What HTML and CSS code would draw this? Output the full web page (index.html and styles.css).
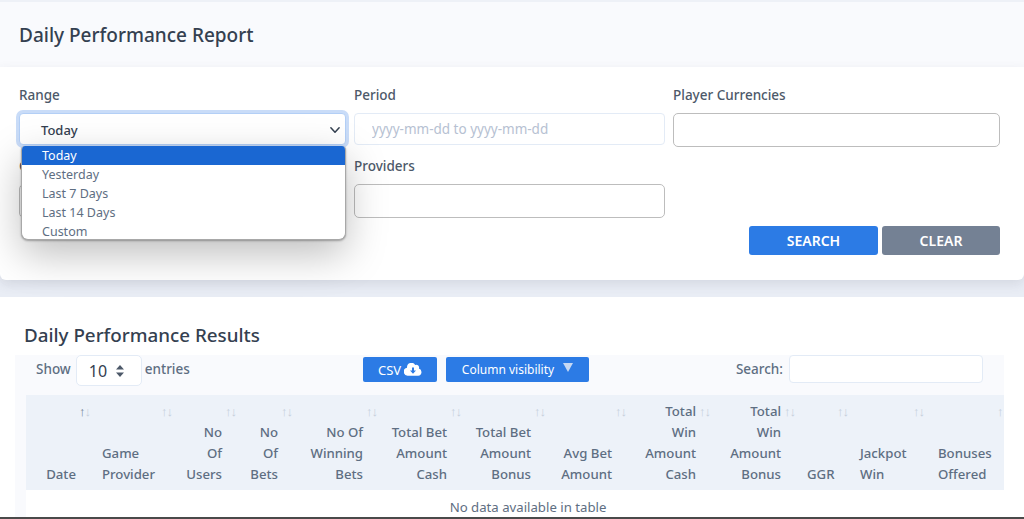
FILE: index.html
```html
<!DOCTYPE html>
<html>
<head>
<meta charset="UTF-8">
<title>Daily Performance Report</title>
<link rel="stylesheet" href="styles.css">
</head>
<body>

<div class="page">

	<div class="report-head">
		<h1 class="title">Daily Performance Report</h1>
	</div>

	<div class="filter-card">
		<div class="filter-grid">
			<div class="field">
				<label class="field-label">Range</label>
				<div class="range-select">
					<span>Today</span>
					<svg class="chevron" width="12" height="12" viewBox="0 0 16 16"><path d="M2.500 5l5.500 6 5.500-6" fill="none" stroke="#344050" stroke-width="2" stroke-linecap="round" stroke-linejoin="round"/></svg>
				</div>
				<ul class="range-menu">
					<li class="selected">Today</li>
					<li>Yesterday</li>
					<li>Last 7 Days</li>
					<li>Last 14 Days</li>
					<li>Custom</li>
				</ul>
			</div>
			<div class="field">
				<label class="field-label">Period</label>
				<input class="period-input" type="text" placeholder="yyyy-mm-dd to yyyy-mm-dd">
			</div>
			<div class="field">
				<label class="field-label">Player Currencies</label>
				<input class="box" type="text">
			</div>
			<div class="field">
				<label class="field-label">Games</label>
				<input class="box" type="text">
			</div>
			<div class="field">
				<label class="field-label">Providers</label>
				<input class="box" type="text">
			</div>
		</div>
		<div class="actions">
			<button class="btn btn-search" type="button">SEARCH</button>
			<button class="btn btn-clear" type="button">CLEAR</button>
		</div>
	</div>

	<div class="results-card">
		<h2 class="title results-title">Daily Performance Results</h2>
		<div class="table-wrap">
			<div class="toolbar">
				<div class="length">
					<span>Show</span>
					<div class="length-select">
						<span>10</span>
						<svg width="10" height="14" viewBox="0 0 10 14"><path d="M5 1l4 4.600H1zM5 13L1 8.400h8z" fill="#4d5969"/></svg>
					</div>
					<span>entries</span>
				</div>
				<button class="tool-btn btn-csv" type="button">CSV
					<svg width="18" height="13" viewBox="0 0 18 13"><path d="M14.900 5.600A2.800 2.800 0 0 0 11.200 2 4.400 4.400 0 0 0 3 4.200v.5A4.100 4.100 0 0 0 4.200 12.800h10a3.700 3.700 0 0 0 .7-7.200z" fill="#fff"/><path d="M8 4.500h2v3h2L9 10.800 6 7.500h2z" fill="#2c7be5"/></svg>
				</button>
				<button class="tool-btn btn-columns" type="button">Column visibility
					<svg width="10" height="9" viewBox="0 0 10 9"><path d="M0 0h10L5 9z" fill="#c6d8f3"/></svg>
				</button>
				<div class="search">
					<label>Search:</label>
					<input class="search-input" type="text">
				</div>
			</div>
			<table class="results">
				<colgroup>
					<col class="c68"><col class="c82"><col class="c64"><col class="c56"><col class="c85">
					<col class="c84"><col class="c84"><col class="c81"><col class="c84"><col class="c85">
					<col class="c53"><col class="c76"><col class="c84">
				</colgroup>
				<thead>
					<tr>
						<th class="num"><span class="sort"><b>↑</b>↓</span>Date</th>
						<th><span class="sort">↑↓</span>Game<br>Provider</th>
						<th class="num"><span class="sort">↑↓</span>No<br>Of<br>Users</th>
						<th class="num"><span class="sort">↑↓</span>No<br>Of<br>Bets</th>
						<th class="num"><span class="sort">↑↓</span>No Of<br>Winning<br>Bets</th>
						<th class="num"><span class="sort">↑↓</span>Total Bet<br>Amount<br>Cash</th>
						<th class="num"><span class="sort">↑↓</span>Total Bet<br>Amount<br>Bonus</th>
						<th class="num"><span class="sort">↑↓</span>Avg Bet<br>Amount</th>
						<th class="num"><span class="sort">↑↓</span>Total<br>Win<br>Amount<br>Cash</th>
						<th class="num"><span class="sort">↑↓</span>Total<br>Win<br>Amount<br>Bonus</th>
						<th><span class="sort">↑↓</span>GGR</th>
						<th><span class="sort">↑↓</span>Jackpot<br>Win</th>
						<th class="last"><span class="sort">↑↓</span>Bonuses<br>Offered</th>
					</tr>
				</thead>
				<tbody>
					<tr>
						<td class="empty" colspan="13">No data available in table</td>
					</tr>
				</tbody>
			</table>
		</div>
	</div>

</div>

</body>
</html>
```

FILE: styles.css
```css
* {
	box-sizing: border-box;
}

body {
	margin: 0;
	font-family: "Noto Sans", "Open Sans", sans-serif;
	font-size: 13.5px;
	color: #5e6e82;
}

.page {
	height: 519px;
	overflow: hidden;
	display: flex;
	flex-direction: column;
	background: #e9edf5;
	border-bottom: 2px solid #4a4a4a;
}

.title {
	margin: 0;
	font-size: 19px;
	font-weight: 500;
	line-height: 28px;
	color: #344050;
}

.report-head {
	height: 67px;
	padding: 19px 19px 0;
	background: #f9fafd;
	border-top: 2px solid #eef1f7;
}

.filter-card {
	height: 213px;
	padding: 18px 24px 0 19px;
	background: #fff;
	border-radius: 0 0 6px 6px;
	box-shadow: 0 4px 12px rgba(65, 69, 88, .12);
	position: relative;
	z-index: 1;
}

.filter-grid {
	display: grid;
	grid-template-columns: 327px 311px 327px;
	column-gap: 8px;
	row-gap: 9px;
}

.field {
	position: relative;
}

.field-label {
	display: block;
	height: 20px;
	line-height: 20px;
	margin-bottom: 8px;
	font-weight: 500;
	color: #4d5969;
}

.range-select {
	height: 32px;
	padding: 1px 4px 0 21px;
	display: flex;
	align-items: center;
	justify-content: space-between;
	background: #fff;
	border: 1px solid #b3cff6;
	border-radius: 4px;
	box-shadow: 0 0 0 3px #c9dcf8;
	font-weight: 500;
	color: #344050;
	font-size: 13px;
}

.range-menu {
	position: absolute;
	left: 2px;
	top: 61px;
	width: 325px;
	height: 94px;
	margin: 0;
	padding: 0;
	list-style: none;
	overflow: hidden;
	background: #fff;
	border: 1px solid #a8a8a8;
	border-top: 0;
	border-radius: 4px 4px 7px 7px;
	box-shadow: 0 1px 2px rgba(0, 0, 0, .3), 0 14px 40px rgba(0, 0, 0, .26);
	z-index: 5;
	font-size: 12.5px;
}

.range-menu li {
	height: 19px;
	line-height: 19px;
	padding-left: 20px;
}

.range-menu .selected {
	background: #1a67d2;
	color: #fff;
}

.period-input {
	display: block;
	width: 100%;
	height: 32px;
	padding: 0 17px;
	background: #fff;
	border: 1px solid #e3ebf6;
	border-radius: 4px;
	font: 13.5px "Noto Sans", sans-serif;
}

.period-input::placeholder {
	color: #b6c1d2;
	opacity: 1;
}

.box {
	display: block;
	width: 100%;
	height: 34px;
	background: #fff;
	border: 1px solid #bdbdbd;
	border-radius: 5px;
}

.actions {
	display: flex;
	justify-content: flex-end;
	gap: 4px;
	margin-top: 8px;
}

.btn {
	height: 29px;
	border: 0;
	border-radius: 3px;
	color: #fff;
	font: 600 14px "Noto Sans", sans-serif;
}

.btn-search {
	width: 129px;
	background: #2c7be5;
}

.btn-clear {
	width: 118px;
	background: #748194;
}

.results-card {
	flex: 1;
	margin-top: 17px;
	padding: 24px 20px 0 15px;
	background: #fff;
	min-height: 0;
}

.results-title {
	margin-left: 9px;
	margin-bottom: 6px;
	font-size: 18.8px;
}

.table-wrap {
	height: 200px;
	padding-left: 11px;
	background: #f9fafd;
	overflow: hidden;
}

.toolbar {
	height: 40px;
	display: flex;
	align-items: flex-start;
	font-weight: 500;
}

.length {
	width: 337px;
	display: flex;
	align-items: flex-start;
	padding-left: 10px;
	line-height: 28px;
}

.length-select {
	width: 66px;
	height: 31px;
	margin: 0 3px 0 5px;
	padding: 0 16px 0 12px;
	display: flex;
	align-items: center;
	justify-content: space-between;
	background: #fff;
	border: 1px solid #e3ebf6;
	border-radius: 5px;
	font-size: 16px;
	font-weight: 400;
	color: #344050;
}

.tool-btn {
	height: 25px;
	margin-top: 2px;
	padding: 0;
	border: 0;
	border-radius: 2px;
	background: #2c7be5;
	color: #fff;
	font: 13px "Noto Sans", sans-serif;
	display: flex;
	align-items: center;
	justify-content: center;
}

.btn-csv {
	width: 74px;
	gap: 3px;
	margin-right: 9px;
}

.btn-columns {
	width: 143px;
	gap: 9px;
	font-size: 12px;
}

.btn-columns svg {
	margin-top: -4px;
}

.search {
	margin-left: auto;
	padding-right: 21px;
	display: flex;
	align-items: flex-start;
	gap: 6px;
	line-height: 29px;
}

.search-input {
	width: 194px;
	height: 28px;
	background: #fff;
	border: 1px solid #e3ebf6;
	border-radius: 4px;
}

.results {
	width: 986px;
	table-layout: fixed;
	border-collapse: collapse;
}

.c53 { width: 53px; }
.c56 { width: 56px; }
.c64 { width: 64px; }
.c68 { width: 68px; }
.c76 { width: 76px; }
.c81 { width: 81px; }
.c82 { width: 82px; }
.c84 { width: 84px; }
.c85 { width: 85px; }

.results th {
	position: relative;
	height: 95px;
	padding: 0 18px 5px 8px;
	vertical-align: bottom;
	text-align: left;
	font-size: 13.2px;
	font-weight: 500;
	line-height: 21px;
	background: #edf2f9;
	white-space: nowrap;
}

.results th.num {
	text-align: right;
}

.results th.last {
	padding-left: 10px;
}

.sort {
	position: absolute;
	right: 4px;
	top: 7px;
	font-size: 13px;
	line-height: 18px;
	font-weight: 400;
	color: #c5cfdc;
	letter-spacing: -1px;
}

.sort b {
	font-weight: 400;
	color: #748194;
}

.results td.empty {
	height: 34px;
	padding: 0 0 0 18px;
	text-align: center;
	background: #fff;
	vertical-align: top;
	font-size: 13.2px;
	line-height: 34px;
}
```
